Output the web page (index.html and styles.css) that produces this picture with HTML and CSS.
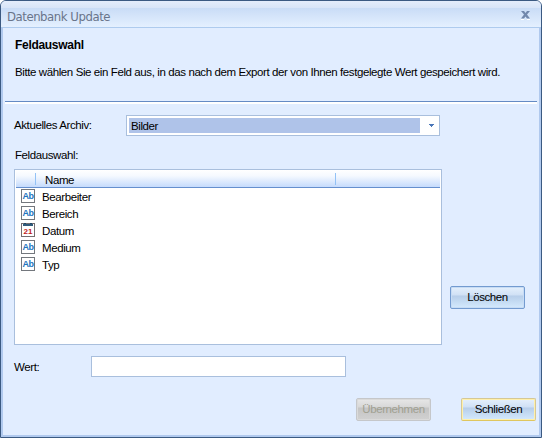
FILE: index.html
```html
<!DOCTYPE html>
<html lang="de">
<head>
  <meta charset="UTF-8">
  <title>Datenbank Update</title>
  <link rel="stylesheet" href="styles.css">
</head>
<body>
  <div class="window">
    <header class="titlebar">
      <span class="title">Datenbank Update</span>
      <svg class="close" width="11" height="10" viewBox="0 0 11 10">
        <path d="M1 9.500h3M7 9.500h3" stroke="#fff"/>
        <path d="M1 1h3l1.500 2L7 1h3L7 4.500 10 8.500H7L5.500 6.500 4 8.500H1L4 4.500z" fill="#7288ac"/>
      </svg>
    </header>

    <main class="content">
      <section class="intro">
        <h1>Feldauswahl</h1>
        <p>Bitte wählen Sie ein Feld aus, in das nach dem Export der von Ihnen festgelegte Wert gespeichert wird.</p>
      </section>

      <div class="archive">
        <label>Aktuelles Archiv:</label>
        <div class="combo">
          <div class="selected">Bilder</div>
          <svg class="arrow" width="5" height="4" viewBox="0 0 5 4" shape-rendering="crispEdges">
            <path d="M0 0h5v1H4v1H3v1H2V2H1V1H0z" fill="#4a76b8"/>
          </svg>
        </div>
      </div>

      <label class="list-label">Feldauswahl:</label>
      <div class="list-area">
        <div class="list">
          <div class="list-header"><span class="col-icon"></span><span class="col-name">Name</span></div>
          <ul>
            <li><span class="ab">Ab</span>Bearbeiter</li>
            <li><span class="ab">Ab</span>Bereich</li>
            <li>
              <svg class="date" width="14" height="14" viewBox="0 0 14 14" shape-rendering="crispEdges">
                <path d="M.5 .5h13v13H.5z" fill="#fff" stroke="#756e70"/>
                <path d="M2 1h10v2H2z" fill="#315b7b"/>
                <path d="M3 0h2v1H3zM9 0h2v1H9z" fill="#1f4763"/>
                <text x="7" y="11" text-anchor="middle">21</text>
              </svg>Datum
            </li>
            <li><span class="ab">Ab</span>Medium</li>
            <li><span class="ab">Ab</span>Typ</li>
          </ul>
        </div>
        <button class="btn">Löschen</button>
      </div>

      <div class="value">
        <label>Wert:</label>
        <input type="text">
      </div>

      <footer class="actions">
        <button class="btn disabled" disabled>Übernehmen</button>
        <button class="btn default">Schließen</button>
      </footer>
    </main>
  </div>
</body>
</html>
```
FILE: styles.css
```css
* {
  box-sizing: border-box;
}
body {
  margin: 0;
  background: #fff;
  font-family: "Liberation Sans", Arial, sans-serif;
  font-size: 11.5px;
  line-height: 16px;
  letter-spacing: -0.4px;
  color: #000;
}
.window {
  width: 542px;
  height: 438px;
  border: 1px solid #3b5a82;
  border-radius: 6px 6px 0 0;
  overflow: hidden;
  background: #e1edff;
}
.titlebar {
  height: 27px;
  padding: 1px 10px 0 6px;
  display: flex;
  align-items: center;
  justify-content: space-between;
  background: linear-gradient(#e4edfb 0, #d8e5f8 7px, #c9dcf6 7px, #e4f0ff 26px);
  border-bottom: 1px solid #aecbee;
}
.title {
  font-family: "DejaVu Sans Condensed", "DejaVu Sans", sans-serif;
  font-stretch: condensed;
  font-size: 13px;
  letter-spacing: -0.45px;
  padding-top: 4px;
  color: #69748a;
}
.close {
  margin-top: 1px;
}
.content {
  height: 409px;
  border: 2px solid #b0c9ee;
  border-top: 0;
  padding: 0 2px;
}
h1, p {
  margin: 0;
  font-size: 11.5px;
  line-height: 16px;
  padding-left: 10px;
  white-space: nowrap;
}
h1 {
  font-size: 12px;
  letter-spacing: -0.3px;
}
.intro {
  height: 76px;
  padding-top: 9px;
  border-bottom: 2px solid #fff;
  background: linear-gradient(#658bc4, #658bc4) left bottom / 100% 1px no-repeat;
}
.intro p {
  margin-top: 11px;
}
.archive {
  display: flex;
  margin: 11px 0 0 9px;
  height: 21px;
}
.archive label {
  width: 112px;
  padding-top: 2px;
}
.combo {
  width: 314px;
  padding: 2px 5px 2px 2px;
  border: 1px solid #a9bfdd;
  background: #fff;
  display: flex;
  align-items: center;
  justify-content: space-between;
}
.selected {
  width: 291px;
  height: 15px;
  padding-left: 2px;
  line-height: 16px;
  background: #afc3e9;
}
.list-label {
  display: block;
  margin: 11px 0 0 9px;
  padding-left: 1px;
  height: 22px;
}
.list-area {
  display: flex;
  align-items: flex-end;
  margin-left: 9px;
}
.list {
  width: 428px;
  height: 176px;
  border: 1px solid #a9bfdd;
  background: #fff;
}
.list-header {
  height: 18px;
  margin: 0 1px;
  display: flex;
  align-items: center;
  border-bottom: 1px solid #658fce;
  background: linear-gradient(#fff, #f5f9ff 35%, #c5dbfc);
}
.col-icon, .col-name {
  height: 12px;
  border-right: 1px solid #93c2f6;
}
.col-icon {
  width: 20px;
}
.col-name {
  width: 300px;
  padding-left: 9px;
  line-height: 14px;
}
ul {
  list-style: none;
  margin: 0;
  padding: 1px 0 0 6px;
}
li {
  display: flex;
  align-items: flex-start;
  height: 17px;
  line-height: 16px;
}
.ab, .date {
  width: 14px;
  height: 14px;
  margin-right: 7px;
}
.ab {
  border: 1px solid #73777d;
  background: #fff;
  color: #2373bd;
  font-size: 9px;
  font-weight: bold;
  line-height: 12px;
  text-align: center;
  letter-spacing: -0.5px;
}
.date text {
  font-size: 8px;
  font-weight: bold;
  letter-spacing: 0;
  fill: #c01920;
}
.btn {
  width: 75px;
  height: 23px;
  padding: 0;
  font: inherit;
  letter-spacing: inherit;
  line-height: 21px;
  color: #000;
  border: 1px solid #739bd0;
  border-radius: 2px;
  box-shadow: inset 0 0 0 1px #c7dcf5;
  background: linear-gradient(#e5f0fc, #cfe0f5 40%, #b6cde9 41%, #d4eafd);
}
.list-area .btn {
  margin: 0 0 36px 8px;
}
.btn.disabled {
  color: #a0a091;
  border-color: #c5c7ca;
  box-shadow: inset 0 0 0 1px #dadada;
  background: linear-gradient(#e7e7e7, #d7d7d7 40%, #c4c4c4 41%, #d1d1d1);
}
.btn.default {
  border-color: #d5c895;
  border-bottom-color: #dfc65e;
  box-shadow: inset 0 0 0 1px #fff0ab;
}
.value {
  display: flex;
  margin: 11px 0 0 9px;
}
.value label {
  width: 77px;
  padding-top: 3px;
}
.value input {
  width: 255px;
  height: 21px;
  border: 1px solid #a9bfdd;
  background: #fff;
  outline: none;
}
.actions {
  display: flex;
  justify-content: flex-end;
  gap: 30px;
  margin: 21px 1px 0 0;
}
```
